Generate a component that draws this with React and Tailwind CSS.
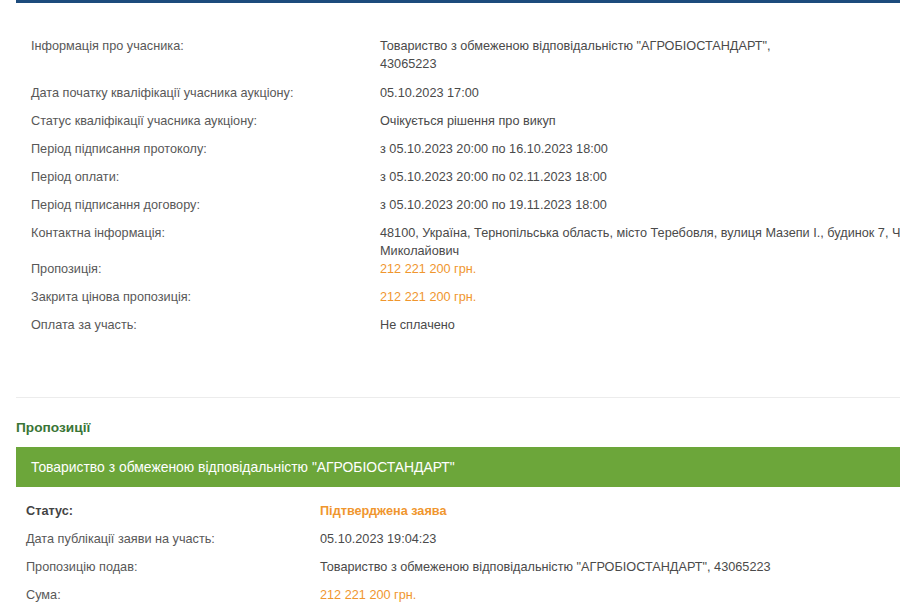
import React from 'react';

const topRows = [
    { label: 'Інформація про учасника:', value: <>Товариство з обмеженою відповідальністю "АГРОБІОСТАНДАРТ",<br />43065223</>, extra: true },
    { label: 'Дата початку кваліфікації учасника аукціону:', value: '05.10.2023 17:00' },
    { label: 'Статус кваліфікації учасника аукціону:', value: 'Очікується рішення про викуп' },
    { label: 'Період підписання протоколу:', value: 'з 05.10.2023 20:00 по 16.10.2023 18:00' },
    { label: 'Період оплати:', value: 'з 05.10.2023 20:00 по 02.11.2023 18:00' },
    { label: 'Період підписання договору:', value: 'з 05.10.2023 20:00 по 19.11.2023 18:00' },
    { label: 'Контактна інформація:', value: <>48100, Україна, Тернопільська область, місто Теребовля, вулиця Мазепи І., будинок 7, Ч<br />Миколайович</>, fixed: true },
    { label: 'Пропозиція:', value: '212 221 200 грн.', orange: true },
    { label: 'Закрита цінова пропозиція:', value: '212 221 200 грн.', orange: true },
    { label: 'Оплата за участь:', value: 'Не сплачено' },
];

const bidRows = [
    { label: 'Статус:', value: 'Підтверджена заява', bold: true, orange: true },
    { label: 'Дата публікації заяви на участь:', value: '05.10.2023 19:04:23' },
    { label: 'Пропозицію подав:', value: 'Товариство з обмеженою відповідальністю "АГРОБІОСТАНДАРТ", 43065223' },
    { label: 'Сума:', value: '212 221 200 грн.', orange: true },
];

const InfoRow = ({ row, labelW }) => (
    <div className={`flex pt-[5px] leading-[18px] ${row.extra ? 'pb-[6px]' : 'pb-[5px]'} ${row.fixed ? 'h-[36px]' : ''}`}>
        <div className={`shrink-0 ${labelW} ${row.bold ? 'font-bold text-[#444]' : 'text-[#585858]'}`}>{row.label}</div>
        <div className={`whitespace-nowrap ${row.orange ? 'text-[#f0962e]' : 'text-[#4a4a4a]'} ${row.bold ? 'font-bold' : ''}`}>{row.value}</div>
    </div>
);

export default function App() {
    return (
        <div className="w-full h-[613px] overflow-hidden bg-white text-[12.7px]" style={{ fontFamily: '"Liberation Sans", Arial, sans-serif' }}>
            <div className="ml-4 w-[1100px]">
                <div className="h-[3px] bg-[#1d4b7c]" />
                <div className="pt-[29px] pl-[15px]">
                    {topRows.map((r, i) => <InfoRow key={i} row={r} labelW="w-[349px]" />)}
                </div>
                <div className="mt-[58px] h-px bg-[#ececec]" />
                <h3 className="mt-[21px] text-[13.7px] font-bold text-[#3a7536] leading-[18px]">Пропозиції</h3>
                <div className="mt-[10px] h-[40px] bg-[#6ca63a] flex items-center pl-[15px] text-white text-[13.9px]">
                    Товариство з обмеженою відповідальністю "АГРОБІОСТАНДАРТ"
                </div>
                <div className="pt-[10px] pl-[10px]">
                    {bidRows.map((r, i) => <InfoRow key={i} row={r} labelW="w-[294px]" />)}
                </div>
            </div>
        </div>
    );
}
